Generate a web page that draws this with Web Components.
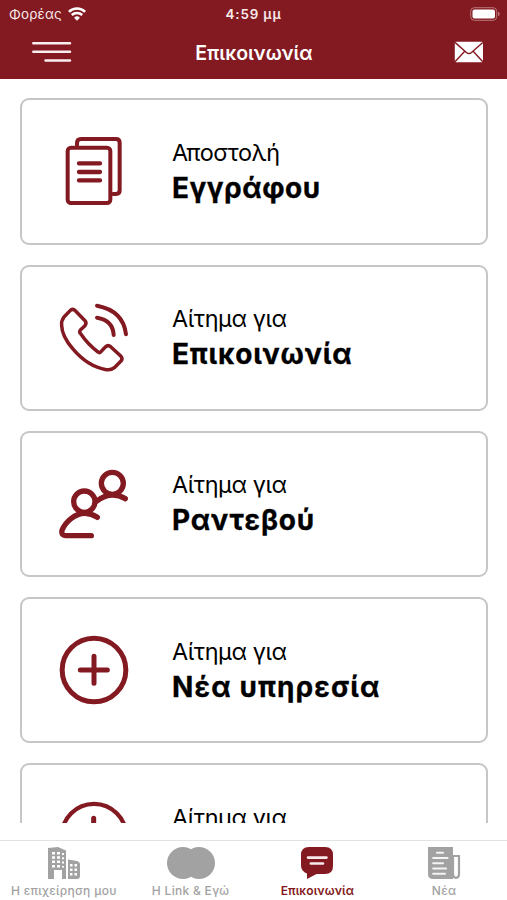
<!DOCTYPE html>
<html lang="el">
<head>
<meta charset="utf-8">
<title>Επικοινωνία</title>
<style>
html,body{margin:0;height:100%;background:#fff;overflow:hidden}
body{font-family:Inter,"Liberation Sans",sans-serif;--brand:#841a21}
</style>
</head>
<body>
<contact-app></contact-app>
<script>
class Base extends HTMLElement{
  constructor(){super();this.attachShadow({mode:'open'});}
  connectedCallback(){this.shadowRoot.innerHTML=this.view();}
}
customElements.define('status-bar',class extends Base{view(){return `
<style>
:host{display:grid;grid-template-columns:1fr auto 1fr;align-items:center;height:27px;color:#f8e9e9;font-size:13.4px;line-height:16px;box-sizing:border-box;padding:0 7px 0 9px}
.l{display:flex;align-items:center;gap:6px}
.carrier{letter-spacing:.2px}
.time{font-weight:600;letter-spacing:.85px;margin-right:2px}
.b{justify-self:end}
svg{display:block}
</style>
<div class="l"><span class="carrier">Φορέας</span>
<svg width="18" height="14" viewBox="0 0 18 14" fill="none" stroke="#fff" stroke-width="2.5"><path d="M.9 4.9a11.6 11.6 0 0 1 16.2 0M3.8 8a7.5 7.5 0 0 1 10.4 0"/><path d="M9 13.8 6.1 10.7a4.2 4.2 0 0 1 5.8 0Z" fill="#fff" stroke="none"/></svg></div>
<span class="time">4:59 μμ</span>
<svg class="b" width="30" height="14" viewBox="0 0 30 14"><rect x=".7" y=".7" width="26" height="12.6" rx="3.6" fill="none" stroke="#b9777b"/><rect x="2.5" y="2.4" width="22.5" height="9.2" rx="2" fill="#fff"/><path d="M28 4.8q1.8.6 1.8 2.2T28 9.2Z" fill="#b9777b"/></svg>`}});
customElements.define('nav-bar',class extends Base{view(){return `
<style>
:host{display:grid;grid-template-columns:1fr auto 1fr;align-items:center;height:50px;box-sizing:border-box;padding:0 23px 0 32px;color:#fff}
.title{font-size:19.5px;font-weight:600;line-height:24px;padding-top:1px;margin:0 8px 0 0}
.m{justify-self:end}svg{display:block}
</style>
<svg width="40" height="22" viewBox="0 0 40 22" stroke="#faeeee" stroke-width="2.5" stroke-linecap="round"><path d="M1.3 2.2H38M1.3 10.8H38M13.5 19.4H38"/></svg>
<span class="title"><slot></slot></span>
<svg class="m" width="30" height="22" viewBox="0 0 30 22"><rect x=".8" y=".8" width="28.2" height="20.4" rx="1.2" fill="#fff"/><path d="M1 1.4 12.4 11.4Q15 13.8 17.5 11.4L28.8 1.4M1 20.7 10.5 10.5M28.8 20.7 19.4 10.5" fill="none" stroke="#841a21" stroke-width="1.4"/></svg>`}});
const ICONS={
documents:['6',`<rect x="83" y="86" width="128" height="166" rx="10"/><path d="M111 78V72Q111 60 123 60H228Q239 60 239 71V214Q239 225 228 225H219"/><path d="M117 133H180M117 159H180M117 184H180" stroke-width="13"/>`,12],
phone:['-6',`<path d="M91 61Q99 55 106 62L135 92Q141 99 135 107L121 120Q117 125 121 130Q144 164 174 186Q179 190 183 185L196 171Q204 163 212 170L243 199Q249 206 243 213L223 233Q213 241 199 239Q143 230 98 176Q66 139 65 107Q63 93 72 81Z"/><path d="M171 83Q219 91 221 135M171 47Q250 62 258 133" stroke-width="12"/>`,10.5],
people:['-3',`<circle cx="133" cy="140" r="32"/><circle cx="217" cy="85" r="33"/><path d="M172 187Q132 161 93 191Q74 206 66 226Q63 241 77 242H154M169 139Q212 105 256 131"/>`,16],
plus:['0',`<circle cx="162" cy="150" r="95.5" stroke-width="15"/><path d="M162 109V190M121 150H202"/>`,15],
alert:['0',`<circle cx="162" cy="150" r="96.5" stroke-width="13"/><path d="M161 97V160M161 196V197" stroke-width="15"/>`,14]};
customElements.define('action-icon',class extends Base{view(){const [y,p,w]=ICONS[this.getAttribute('name')];return `
<style>:host{display:block;width:110px;height:100px}svg{display:block}</style>
<svg width="110" height="100" viewBox="0 ${y} 330 300" fill="none" stroke="#841a21" stroke-width="${w}" stroke-linecap="round" stroke-linejoin="round">${p}</svg>`}});
customElements.define('action-card',class extends Base{view(){return `
<style>
:host{display:flex;align-items:center;flex:none;box-sizing:border-box;height:146.2px;border:2px solid #c6c6c6;border-radius:9px;padding-left:18px;gap:22px;color:#000}
.t{display:flex;flex-direction:column;white-space:nowrap;padding-top:3px}
.a{font-size:23.4px;line-height:30px;font-weight:400;letter-spacing:-.4px}
.b{font-size:28px;line-height:40px;height:40px;font-weight:700;letter-spacing:var(--ls,.8px);-webkit-text-stroke:.3px #000}
</style>
<action-icon name="${this.getAttribute('icon')}"></action-icon>
<div class="t"><span class="a"><slot name="lead"></slot></span><span class="b"><slot></slot></span></div>`}});
const TABS={
buildings:`<path fill-rule="evenodd" d="M0 1 10 0 18 3.5V32H14V23H6V32H0ZM4 5V7.5H7V5ZM9 5V7.5H12V5ZM4 9.3V11.8H7V9.3ZM9 9.3V11.8H12V9.3ZM4 13.6V16.1H7V13.6ZM9 13.6V16.1H12V13.6ZM4 17.9V20.4H7V17.9ZM9 17.9V20.4H12V17.9ZM14 6V8H16V6ZM14 10.3V12.3H16V10.3ZM14 14.6V16.6H16V14.6ZM14 18.9V20.4H16V18.9Z"/><path fill-rule="evenodd" d="M20 12.5 29 14Q32 15 32 17V29Q32 32 29 32H20ZM22 17V19.5H24.5V17ZM26.5 17V19.5H29V17ZM22 21.5V24H24.5V21.5ZM26.5 21.5V24H29V21.5ZM22 26V28.5H24.5V26ZM26.5 26V28.5H29V26Z"/>`,
circles:`<circle cx="8" cy="16" r="16"/><circle cx="24" cy="16" r="16"/>`,
chat:`<path d="M8 0H24Q32 0 32 8V19Q32 27 24 27H15.5L6 32V26.4Q0 24.5 0 18.5V8Q0 0 8 0Z"/><path d="M7 10.6H25.5M9.8 16.5H22" stroke="#f8eaea" stroke-width="2.6" stroke-linecap="round"/>`,
news:`<path d="M0 0H25V32H5Q0 32 0 27Z"/><path d="M25 9H31V27Q31 30.8 28 30.8Q25 30.8 25 27Z" fill="#fff" stroke="currentColor" stroke-width="2.2"/><path d="M9 5.8H15M5.2 11H19.5M5.2 16.2H15M5.2 21.5H18M5.2 26.8H17" stroke="#f4f4f4" stroke-width="2.1" stroke-linecap="round"/>`};
customElements.define('tab-item',class extends Base{view(){return `
<style>
:host{display:flex;flex-direction:column;align-items:center;gap:5px;padding:6.5px 0 0 1px;color:#a2a2a2;font-size:12px;line-height:14px;font-weight:500;white-space:nowrap}
:host([active]){color:#841a21;font-weight:600;--ls:.1px}
svg{display:block;overflow:visible}
span{letter-spacing:var(--ls,.3px)}
</style>
<svg width="32" height="32" viewBox="0 0 32 32" fill="currentColor">${TABS[this.getAttribute('icon')]}</svg><span><slot></slot></span>`}});
customElements.define('contact-app',class extends Base{view(){return `
<style>
:host{display:flex;flex-direction:column;height:900px;width:507px;background:#fff}
header{background:var(--brand);height:79px;flex:none}
main{display:flex;flex-direction:column;gap:20px;box-sizing:border-box;height:744px;padding:19.4px 19.3px 0 20px;overflow:hidden;flex:none}
footer{display:grid;grid-template-columns:repeat(4,1fr);margin-top:16.5px;border-top:1px solid #e2e2e2;flex:1}
</style>
<header><status-bar></status-bar><nav-bar>Επικοινωνία</nav-bar></header>
<main>
<action-card icon="documents" style="--ls:.5px"><span slot="lead">Αποστολή</span>Εγγράφου</action-card>
<action-card icon="phone"><span slot="lead">Αίτημα για</span>Επικοινωνία</action-card>
<action-card icon="people"><span slot="lead">Αίτημα για</span>Ραντεβού</action-card>
<action-card icon="plus" style="--ls:1.1px"><span slot="lead">Αίτημα για</span>Νέα υπηρεσία</action-card>
<action-card icon="alert"><span slot="lead">Αίτημα για</span></action-card>
</main>
<footer>
<tab-item icon="buildings">Η επιχείρηση μου</tab-item>
<tab-item icon="circles">Η Link &amp; Εγώ</tab-item>
<tab-item icon="chat" active>Επικοινωνία</tab-item>
<tab-item icon="news">Νέα</tab-item>
</footer>`}});
</script>
</body>
</html>
